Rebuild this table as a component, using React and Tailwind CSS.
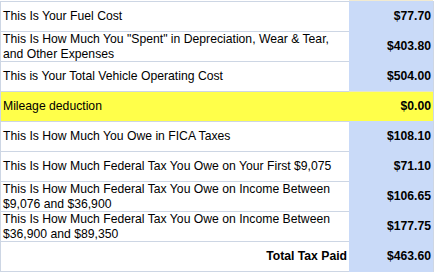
import React from "react";

const rows = [
  { label: "This Is Your Fuel Cost", value: "$77.70" },
  {
    label: 'This Is How Much You "Spent" in Depreciation, Wear & Tear, and Other Expenses',
    value: "$403.80",
  },
  { label: "This is Your Total Vehicle Operating Cost", value: "$504.00" },
  { label: "Mileage deduction", value: "$0.00", highlight: true },
  { label: "This Is How Much You Owe in FICA Taxes", value: "$108.10" },
  { label: "This Is How Much Federal Tax You Owe on Your First $9,075", value: "$71.10" },
  {
    label: "This Is How Much Federal Tax You Owe on Income Between $9,076 and $36,900",
    value: "$106.65",
  },
  {
    label: "This Is How Much Federal Tax You Owe on Income Between $36,900 and $89,350",
    value: "$177.75",
  },
  { label: "Total Tax Paid", value: "$463.60", total: true },
];

export default function App() {
  return (
    <div
      className="w-[437px] h-[272px] overflow-hidden bg-white text-black text-[12.2px] leading-[15px]"
      style={{ fontFamily: '"Liberation Sans", Arial, sans-serif' }}
    >
      <div className="flex h-px">
        <div className="w-[349px]" />
        <div className="w-[84px] bg-[#f1ead0]" />
      </div>
      <div className="w-[434px] border-l border-r border-[#cdd6e4]">
        {rows.map((row, i) => (
          <div
            key={i}
            className={"flex h-[30px] " + (row.highlight ? "bg-[#ffff4a]" : "")}
          >
            <div
              className={
                "w-[348px] flex items-center border-t border-[#cdd6e4] pl-[2px] pr-[2px] " +
                (row.total ? "justify-end font-bold" : "")
              }
            >
              <span className={row.total ? "" : "max-w-[330px]"}>{row.label}</span>
            </div>
            <div
              className={
                "w-[84px] flex items-center justify-end pr-[2px] font-bold " +
                (row.highlight ? "border-t border-[#e6e6c8]" : "bg-[#c9daf8]")
              }
            >
              {row.value}
            </div>
          </div>
        ))}
        <div className="flex h-px">
          <div className="w-[348px] bg-[#cdd6e4]" />
          <div className="w-[84px] bg-[#c9daf8]" />
        </div>
      </div>
    </div>
  );
}
